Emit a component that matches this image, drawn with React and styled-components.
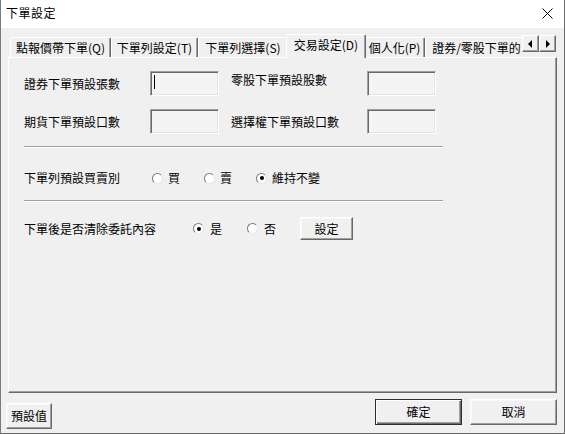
import React from 'react';
import styled, { createGlobalStyle, css } from 'styled-components';

const GlobalStyle = createGlobalStyle`
  html, body {
    margin: 0;
    padding: 0;
    background: #f0f0f0;
  }
  body {
    font-family: "Noto Sans CJK TC", "Microsoft JhengHei", sans-serif;
    font-size: 12px;
    color: #000;
  }
  #root {
    width: 565px;
    height: 434px;
    overflow: hidden;
  }
`

const Janela = styled.div`
    box-sizing: border-box;
    width: 565px;
    height: 434px;
    display: flex;
    flex-direction: column;
    background: #f0f0f0;
    border-left: 1px solid #7a7a7a;
    border-right: 1px solid #6b6b6b;
    border-bottom: 1px solid #6b6b6b;
`

const TitleBar = styled.div`
    height: 28px;
    flex: none;
    background: #fff;
    display: flex;
    align-items: center;
    justify-content: space-between;
    padding: 0 11px 0 5px;
`

const Title = styled.span`
    font-size: 12px;
    letter-spacing: 0.5px;
    line-height: 16px;
    margin-top: -2px;
`

const CloseIcon = styled.svg`
    width: 11px;
    height: 11px;
    margin-top: -2px;
`

const Body = styled.div`
    flex: 1;
    display: flex;
    flex-direction: column;
    padding: 6px 7px 0 7px;
`

const TabStrip = styled.div`
    height: 24px;
    flex: none;
    display: flex;
`

const TabViewport = styled.div`
    flex: 1;
    display: flex;
    align-items: flex-end;
    overflow: hidden;
    padding-left: 2px;
`

const Tab = styled.div`
    box-sizing: border-box;
    flex: none;
    width: ${p => (p.$active ? p.$w + 4 : p.$w)}px;
    height: ${p => (p.$active ? 24 : 20)}px;
    margin: 0 ${p => (p.$active ? -2 : 0)}px ${p => (p.$active ? 0 : 1)}px;
    padding-bottom: ${p => (p.$active ? 3 : 0)}px;
    position: relative;
    z-index: ${p => (p.$active ? 2 : 1)};
    display: flex;
    align-items: center;
    justify-content: center;
    background: #f0f0f0;
    border: 1px solid;
    border-bottom: none;
    border-color: #fff #696969 transparent #fff;
    border-radius: 2px 2px 0 0;
    box-shadow: inset -1px 0 #a0a0a0;
    white-space: nowrap;
    line-height: 16px;
`

const ScrollArrows = styled.div`
    flex: none;
    display: flex;
    align-self: flex-start;
    margin: 1px 1px 0 0;
`

const ArrowButton = styled.div`
    box-sizing: border-box;
    width: 17px;
    height: 17px;
    display: flex;
    align-items: center;
    justify-content: center;
    background: #f0f0f0;
    border: 1px solid;
    border-color: #fff #696969 #696969 #fff;
    box-shadow: inset -1px -1px #a0a0a0;
`

const Panel = styled.div`
    box-sizing: border-box;
    height: 336px;
    flex: none;
    margin-top: -1px;
    border: 1px solid;
    border-color: #fff #696969 #696969 #fff;
    box-shadow: inset -1px -1px #a0a0a0;
    padding: 13px 0 0 15px;
`

const FieldGrid = styled.div`
    display: grid;
    grid-template-columns: 126px 69px 148px 69px;
    grid-auto-rows: 25px;
    row-gap: 13px;
    align-items: center;
`

const FieldLabel = styled.span`
    line-height: 16px;
    padding-left: ${p => p.$indent || 0}px;
    ${p => p.$raised && css`
        align-self: start;
        margin-top: 1px;
    `}
`

const TextBox = styled.div`
    box-sizing: border-box;
    width: 69px;
    height: 25px;
    background: #f4f4f4;
    border: 1px solid;
    border-color: #a0a0a0 #fff #fff #a0a0a0;
    box-shadow: inset 1px 1px #696969, inset -1px -1px #e3e3e3;
    padding: 3px 0 0 3px;
`

const Caret = styled.div`
    width: 1px;
    height: 14px;
    background: #000;
`

const Separator = styled.div`
    width: 419px;
    margin-top: ${p => p.$top}px;
    border-top: 1px solid #a0a0a0;
    border-bottom: 1px solid #fff;
`

const OptionRow = styled.div`
    display: flex;
    align-items: center;
    height: ${p => p.$h}px;
    margin-top: ${p => p.$top}px;
`

const RowLabel = styled.span`
    flex: none;
    width: ${p => p.$w}px;
    line-height: 16px;
`

const RadioItem = styled.label`
    display: flex;
    align-items: center;
    margin-right: ${p => p.$gap}px;
    line-height: 16px;
`

const RadioCircle = styled.span`
    box-sizing: border-box;
    width: 11px;
    height: 11px;
    border-radius: 50%;
    border: 1px solid;
    border-color: #7d7d7d #e6e6e6 #e6e6e6 #7d7d7d;
    background: #fff;
    display: flex;
    align-items: center;
    justify-content: center;
    margin-right: ${p => p.$space || 5}px;

    &::after {
        content: '';
        width: 4px;
        height: 4px;
        border-radius: 50%;
        background: #000;
        display: ${p => (p.$checked ? 'block' : 'none')};
    }
`

const Button = styled.button`
    box-sizing: border-box;
    flex: none;
    width: ${p => p.$w}px;
    height: ${p => p.$h}px;
    margin: ${p => p.$m || '0'};
    padding: 0;
    font: inherit;
    font-size: 12px;
    line-height: 16px;
    color: #000;
    background: #f0f0f0;
    border: 1px solid;
    border-color: #fff #696969 #696969 #fff;
    box-shadow: inset -1px -1px #a0a0a0, inset 1px 1px #f8f8f8;
    ${p => p.$default && css`
        border-color: #2e2e2e;
        box-shadow: inset 1px 1px #fff, inset -1px -1px #696969, inset -2px -2px #a0a0a0;
    `}
`

const Footer = styled.div`
    flex: 1;
    display: flex;
    align-items: flex-start;
    padding-top: 6px;
`

const Spacer = styled.div`
    flex: 1;
`

const tabs = [
    { label: '點報價帶下單(Q)', w: 101 },
    { label: '下單列設定(T)', w: 87 },
    { label: '下單列選擇(S)', w: 90 },
    { label: '交易設定(D)', w: 76, active: true },
    { label: '個人化(P)', w: 61 },
    { label: '證券/零股下單的', w: 103 },
]

function App() {
    return (
        <>
            <GlobalStyle />
            <Janela>
                <TitleBar>
                    <Title>下單設定</Title>
                    <CloseIcon viewBox="0 0 11 11">
                        <path d="M0.5 0.5 L10.5 10.5 M10.5 0.5 L0.5 10.5" stroke="#000" strokeWidth="1" fill="none" />
                    </CloseIcon>
                </TitleBar>
                <Body>
                    <TabStrip>
                        <TabViewport>
                            {tabs.map((tab, index) => (
                                <Tab key={index} $w={tab.w} $active={tab.active}>{tab.label}</Tab>
                            ))}
                        </TabViewport>
                        <ScrollArrows>
                            <ArrowButton>
                                <svg width="5" height="8" viewBox="0 0 5 8"><path d="M4 0 L0 4 L4 8 Z" fill="#000" /></svg>
                            </ArrowButton>
                            <ArrowButton>
                                <svg width="5" height="8" viewBox="0 0 5 8"><path d="M1 0 L5 4 L1 8 Z" fill="#000" /></svg>
                            </ArrowButton>
                        </ScrollArrows>
                    </TabStrip>
                    <Panel>
                        <FieldGrid>
                            <FieldLabel>證券下單預設張數</FieldLabel>
                            <TextBox><Caret /></TextBox>
                            <FieldLabel $indent={12} $raised>零股下單預設股數</FieldLabel>
                            <TextBox />
                            <FieldLabel>期貨下單預設口數</FieldLabel>
                            <TextBox />
                            <FieldLabel $indent={12}>選擇權下單預設口數</FieldLabel>
                            <TextBox />
                        </FieldGrid>
                        <Separator $top={12} />
                        <OptionRow $h={20} $top={20}>
                            <RowLabel $w={128}>下單列預設買賣別</RowLabel>
                            <RadioItem $gap={24}><RadioCircle />買</RadioItem>
                            <RadioItem $gap={24}><RadioCircle />賣</RadioItem>
                            <RadioItem $gap={0}><RadioCircle $checked />維持不變</RadioItem>
                        </OptionRow>
                        <Separator $top={12} />
                        <OptionRow $h={23} $top={15}>
                            <RowLabel $w={169}>下單後是否清除委託內容</RowLabel>
                            <RadioItem $gap={25}><RadioCircle $checked $space={6} />是</RadioItem>
                            <RadioItem $gap={24}><RadioCircle $space={6} />否</RadioItem>
                            <Button $w={53} $h={23}>設定</Button>
                        </OptionRow>
                    </Panel>
                    <Footer>
                        <Button $w={46} $h={26} $m="4px 0 0 -2px">預設值</Button>
                        <Spacer />
                        <Button $w={87} $h={26} $default>確定</Button>
                        <Button $w={87} $h={26} $m="0 0 0 8px">取消</Button>
                    </Footer>
                </Body>
            </Janela>
        </>
    )
}

export default App
